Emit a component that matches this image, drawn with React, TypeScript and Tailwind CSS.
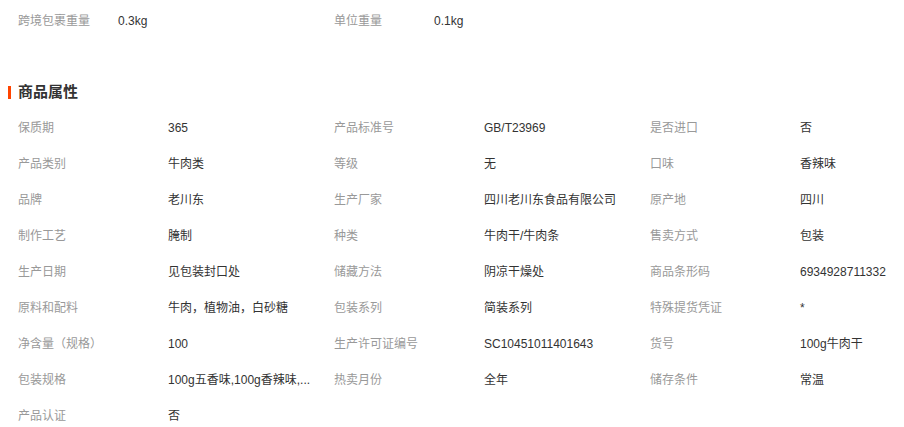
type Attr = [string, string];

const topRow: Attr[] = [
  ["跨境包裹重量", "0.3kg"],
  ["单位重量", "0.1kg"],
];

const attrs: Attr[] = [
  ["保质期", "365"],
  ["产品标准号", "GB/T23969"],
  ["是否进口", "否"],
  ["产品类别", "牛肉类"],
  ["等级", "无"],
  ["口味", "香辣味"],
  ["品牌", "老川东"],
  ["生产厂家", "四川老川东食品有限公司"],
  ["原产地", "四川"],
  ["制作工艺", "腌制"],
  ["种类", "牛肉干/牛肉条"],
  ["售卖方式", "包装"],
  ["生产日期", "见包装封口处"],
  ["储藏方法", "阴凉干燥处"],
  ["商品条形码", "6934928711332"],
  ["原料和配料", "牛肉，植物油，白砂糖"],
  ["包装系列", "简装系列"],
  ["特殊提货凭证", "*"],
  ["净含量（规格）", "100"],
  ["生产许可证编号", "SC10451011401643"],
  ["货号", "100g牛肉干"],
  ["包装规格", "100g五香味,100g香辣味,..."],
  ["热卖月份", "全年"],
  ["储存条件", "常温"],
  ["产品认证", "否"],
];

export default function App() {
  return (
    <div
      className="w-[904px] h-[427px] overflow-hidden bg-white text-[12px] text-[#333]"
      style={{ fontFamily: '"Liberation Sans", "Noto Sans CJK SC", sans-serif' }}
    >
      {/* logistics */}
      <div className="mt-[3px] pl-[18px] grid grid-cols-[100px_216px_100px_1fr] h-9 items-center">
        {topRow.map(([k, v]) => (
          <div key={k} className="contents">
            <span className="text-[#999]">{k}</span>
            <span>{v}</span>
          </div>
        ))}
      </div>

      {/* heading */}
      <div className="mt-[43px] h-5 pl-2 flex items-center">
        <span className="w-[3px] h-[13px] bg-[#ff4400]" />
        <h3 className="ml-[7px] text-[15px] font-bold text-[#333] leading-5">商品属性</h3>
      </div>

      {/* attributes */}
      <div className="mt-[8px] pl-[18px] grid grid-cols-[150px_166px_150px_166px_150px_1fr] auto-rows-[36px] items-center">
        {attrs.map(([k, v]) => (
          <div key={k} className="contents">
            <span className="text-[#999]">{k}</span>
            <span className="whitespace-nowrap">{v}</span>
          </div>
        ))}
      </div>
    </div>
  );
}
